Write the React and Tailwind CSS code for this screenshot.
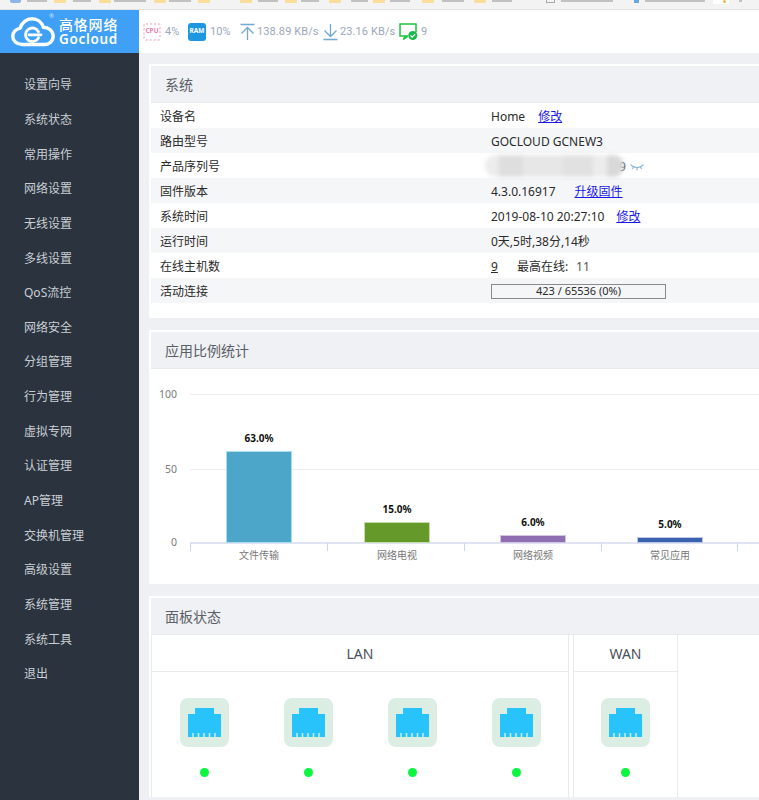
const font = "[font-family:'Noto_Sans','Noto_Sans_CJK_SC',sans-serif]";

const menu = ['设置向导', '系统状态', '常用操作', '网络设置', '无线设置', '多线设置', 'QoS流控', '网络安全', '分组管理', '行为管理', '虚拟专网', '认证管理', 'AP管理', '交换机管理', '高级设置', '系统管理', '系统工具', '退出'];

const bars = [
  { label: '文件传输', value: '63.0%', x: 226, y: 451, color: '#4ba6c9', edge: '#a9dcec' },
  { label: '网络电视', value: '15.0%', x: 364, y: 522, color: '#659a2a', edge: '#c4dca8' },
  { label: '网络视频', value: '6.0%', x: 500, y: 535, color: '#8f6fb1', edge: '#d3c5e2' },
  { label: '常见应用', value: '5.0%', x: 637, y: 537, color: '#3a62ae', edge: '#b9c8e6' },
];

function Folder({ className }) {
  return <div className={`h-[3px] w-3 shrink-0 rounded-b-[1px] bg-[#f9dd98] ${className}`} />;
}

function Smudge({ className }) {
  return <div className={`h-[2px] shrink-0 bg-[#c2c2c2] blur-[0.5px] ${className}`} />;
}

function BookmarkBar() {
  return (
    <div className="flex h-[10px] items-start overflow-hidden border-b border-[#e2e2e2] bg-[#f3f3f3]">
      <div className="ml-[10px] h-[3px] w-[11px] shrink-0 rounded-b-[2px] bg-[#8db4ec]" />
      <Smudge className="ml-[6px] w-5" />
      <Folder className="ml-[7px]" />
      <Smudge className="ml-[7px] w-[18px]" />
      <Folder className="ml-2" />
      <Smudge className="ml-[3px] w-8" />
      <Folder className="ml-2" />
      <Smudge className="ml-[3px] w-[22px]" />
      <Folder className="ml-[7px]" />
      <Folder className="ml-[30px]" />
      <Smudge className="ml-[6px] w-5" />
      <Folder className="ml-[7px]" />
      <Smudge className="ml-1 w-[18px]" />
      <Folder className="ml-[10px]" />
      <Smudge className="ml-[10px] w-[17px]" />
      <Folder className="ml-[5px]" />
      <Smudge className="ml-[5px] w-5" />
      <Folder className="ml-3" />
      <Smudge className="ml-2 w-[22px]" />
      <Folder className="ml-[10px]" />
      <Smudge className="ml-[6px] w-5" />
      <div className="ml-[34px] h-[3px] w-[9px] shrink-0 border-x border-b border-[#aaaaaa]" />
      <Smudge className="ml-[6px] w-[52px]" />
      <div className="ml-[21px] h-[3px] w-[5px] shrink-0 bg-[#6aa5e0]" />
      <Smudge className="ml-[6px] w-[60px]" />
      <div className="ml-2 h-[4px] w-[16px] shrink-0 bg-white" />
      <div className="-ml-[6px] h-[3px] w-[3px] shrink-0 rounded-full bg-[#f5b548]" />
      <Smudge className="ml-[13px] w-[3px]" />
      <Smudge className="ml-6 w-8" />
    </div>
  );
}

function Logo() {
  return (
    <div className="flex h-[43px] w-[139px] shrink-0 items-center bg-[#40a0f5] pl-[11px] text-white">
      <svg width="44" height="30" viewBox="0 0 44 30" fill="none" className="shrink-0">
        <path d="M11 27.500C5.500 27.500 1.800 23.800 1.800 19.400c0-4.300 3.200-7.600 7.300-8C10.600 5.300 15.800 1.800 21 1.800c5.300 0 9.800 3.400 11.300 8.400 5.300 0 9.900 3.800 9.900 8.900 0 4.900-4 8.400-9 8.400Z" stroke="white" strokeWidth="3.400" strokeLinejoin="round" />
        <path d="M27.500 14.800a6.800 6.800 0 1 0 0 6" stroke="white" strokeWidth="2.800" strokeLinecap="round" />
        <path d="M18 17.800h12" stroke="white" strokeWidth="2.800" strokeLinecap="round" />
      </svg>
      <div className="relative ml-[4px] flex flex-col">
        <span className="text-[14px] leading-[15px] font-medium tracking-[0.8px] whitespace-nowrap">高恪网络</span>
        <span className="text-[13.500px] leading-[14px] font-semibold tracking-[0.7px]">Gocloud</span>
        <span className="absolute -top-[5px] -left-[10px] text-[6px] leading-[8px] text-[#cfe6fb]">®</span>
      </div>
    </div>
  );
}

function Stat({ children, icon, className = '' }) {
  return (
    <div className={`flex items-center ${className}`}>
      {icon}
      <span className="font-['Roboto'] text-[11px] leading-4 tracking-[0.1px] whitespace-nowrap text-[#9ba8b8]">{children}</span>
    </div>
  );
}

function TopBar() {
  return (
    <div className="flex h-[43px] flex-1 items-center bg-white pl-[4px]">
      <Stat
        className="w-[45px]"
        icon={
          <div className="mr-[4px] flex h-[18px] w-[18px] items-center justify-center rounded-[3px] border-2 border-dotted border-[#f9c9de]">
            <span className="text-[6.500px] leading-none font-bold text-[#ec7fb0]">CPU</span>
          </div>
        }
      >
        4%
      </Stat>
      <Stat
        className="w-[51px]"
        icon={
          <div className="mr-[4px] flex h-[18px] w-[18px] items-center justify-center rounded-[3px] border border-dotted border-[#1e96e0] bg-[#1e96e0]">
            <span className="text-[6.500px] leading-none font-bold text-white">RAM</span>
          </div>
        }
      >
        10%
      </Stat>
      <Stat
        className="w-[83px]"
        icon={
          <svg width="17" height="18" viewBox="0 0 17 18" fill="none" stroke="#73a8d0" strokeWidth="1.300" className="mr-[1px]">
            <path d="M1.500 1.500h14M8.500 17V5M2.500 10.500l6-6 6 6" />
          </svg>
        }
      >
        138.89 KB/s
      </Stat>
      <Stat
        className="w-[77px]"
        icon={
          <svg width="17" height="18" viewBox="0 0 17 18" fill="none" stroke="#73a8d0" strokeWidth="1.300" className="mr-[1px]">
            <path d="M1.500 16.500h14M8.500 1v12M2.500 7.500l6 6 6-6" />
          </svg>
        }
      >
        23.16 KB/s
      </Stat>
      <Stat
        icon={
          <svg width="19" height="18" viewBox="0 0 19 18" fill="none" className="mr-[3px]">
            <path d="M9 13H1V1h16v8M6 13l-1.500 3.500L9 13" stroke="#19c33c" strokeWidth="1.500" />
            <circle cx="13.800" cy="12.500" r="4.500" fill="#19b84a" />
            <path d="M11.500 12.500l1.700 1.700 3-3" stroke="white" strokeWidth="1.200" />
          </svg>
        }
      >
        9
      </Stat>
    </div>
  );
}

function Sidebar() {
  return (
    <div className="w-[139px] shrink-0 bg-[#2a333e] pt-[15px]">
      {menu.map((item) => (
        <div key={item} className="flex h-[34.650px] items-center pl-6 text-[12px] text-[#c9ced4]">{item}</div>
      ))}
    </div>
  );
}

function PanelHeader({ title }) {
  return (
    <div className="flex h-[37px] items-center border-b border-[#e8eaf0] bg-[#eff1f5] pl-[14px] text-[14px] text-[#5c5f66]">{title}</div>
  );
}

function Row({ label, shaded, children }) {
  return (
    <div className={`flex h-[25px] items-center pl-[9px] pt-[2px] text-[12px] text-[#2b2b2b] ${shaded ? 'bg-[#f5f6f8]' : 'bg-white'}`}>
      <div className="w-[331px] shrink-0">{label}</div>
      <div className="flex items-center whitespace-nowrap">{children}</div>
    </div>
  );
}

function EditLink({ children, className = '' }) {
  return <a href="#" className={`text-[#1a1ae6] underline ${className}`}>{children}</a>;
}

function SystemPanel() {
  return (
    <div className="bg-white pt-[2px] pb-[15px] pl-[2px]">
      <PanelHeader title="系统" />
      <Row label="设备名">Home<EditLink className="ml-[13px]">修改</EditLink></Row>
      <Row label="路由型号" shaded>GOCLOUD GCNEW3</Row>
      <Row label="产品序列号">
        <div className="relative h-[23px] w-[129px]">
          <span className="absolute top-[3px] left-[128px]">9</span>
          <div className="absolute top-0 -left-[6px] flex h-[22px] w-[139px] overflow-hidden rounded-full bg-[#ececec] blur-[2px]">
            <div className="ml-[14px] w-[24px] bg-[#dedede]" />
            <div className="w-[40px] bg-[#e7e7e7]" />
            <div className="w-[30px] bg-[#e1e1e1]" />
            <div className="ml-[14px] w-[17px] bg-[#d9d9d9]" />
          </div>
        </div>
        <svg width="14" height="8" viewBox="0 0 14 8" fill="none" stroke="#7fb3da" strokeWidth="1.100" className="ml-[10px]">
          <path d="M0.500 1.500C4 5.500 10 5.500 13.500 1.500M3.500 4L2.500 6M7 5V7.500M10.500 4L11.500 6" />
        </svg>
      </Row>
      <Row label="固件版本" shaded>4.3.0.16917<EditLink className="ml-[19px]">升级固件</EditLink></Row>
      <Row label="系统时间">2019-08-10 20:27:10<EditLink className="ml-[12px]">修改</EditLink></Row>
      <Row label="运行时间" shaded>0天,5时,38分,14秒</Row>
      <Row label="在线主机数">
        <span className="underline">9</span>
        <span className="ml-[19px]">最高在线:</span>
        <span className="ml-[8px] text-[#555555]">11</span>
      </Row>
      <Row label="活动连接" shaded>
        <div className="flex h-[15px] w-[175px] items-center justify-center border border-[#8a8a8a] bg-[#f5f6f8] text-[11px]">423 / 65536 (0%)</div>
      </Row>
    </div>
  );
}

function AppChart() {
  return (
    <div className="overflow-hidden bg-white pt-[2px] pl-[2px]">
      <PanelHeader title="应用比例统计" />
      {/* viewBox starts where the panel header ends, so coords below read as page coords */}
      <svg width="608" height="215" viewBox="151 369 608 215" className="block">
        <g stroke="#e8ebf2">
          <line x1="190" y1="394.500" x2="760" y2="394.500" />
          <line x1="190" y1="469.500" x2="760" y2="469.500" />
        </g>
        <line x1="190" y1="543" x2="760" y2="543" stroke="#dfe3f3" strokeWidth="2" />
        {[190.500, 327.500, 464.500, 601.500, 737.500].map((x) => (
          <line key={x} x1={x} y1="543" x2={x} y2="551" stroke="#ccd6eb" />
        ))}
        <g fill="#7a7a7a" fontSize="10.500" textAnchor="end" fontFamily="'Noto Sans', sans-serif">
          <text x="177" y="398">100</text>
          <text x="177" y="473">50</text>
          <text x="177" y="546">0</text>
        </g>
        {bars.map((b) => (
          <g key={b.label}>
            <rect x={b.x + 0.5} y={b.y + 0.5} width="65" height={542 - b.y} fill={b.color} stroke={b.edge} />
            <text x={b.x + 33} y={b.y - 9} fontSize="10" fontWeight="700" textAnchor="middle" fill="#111111" fontFamily="'Noto Sans', sans-serif">{b.value}</text>
            <text x={b.x + 33} y="559" fontSize="10" textAnchor="middle" fill="#777777" fontFamily="'Noto Sans CJK SC', sans-serif">{b.label}</text>
          </g>
        ))}
      </svg>
    </div>
  );
}

function Port() {
  return (
    <div className="flex flex-col items-center pt-[26px]">
      <div className="flex h-[49px] w-[49px] items-center justify-center rounded-[8px] bg-[#dceee4]">
        <svg width="33" height="29" viewBox="0 0 33 29">
          <path d="M0 29V6h7V0h19v6h7v23Z" fill="#29c3fb" />
          <g fill="#dceee4">
            <rect x="4.300" y="25" width="1.400" height="4" />
            <rect x="9.800" y="25" width="1.400" height="4" />
            <rect x="15.300" y="25" width="1.400" height="4" />
            <rect x="20.800" y="25" width="1.400" height="4" />
            <rect x="26.300" y="25" width="1.400" height="4" />
          </g>
        </svg>
      </div>
      <div className="mt-[21px] h-[9px] w-[9px] rounded-full bg-[#0cf53f]" />
    </div>
  );
}

function PortPanel() {
  return (
    <div className="bg-white pt-[2px] pl-[2px]">
      <PanelHeader title="面板状态" />
      <div className="flex">
        <div className="w-[418px] border-x border-[#e8eaf0]">
          <div className="flex h-[37px] items-center justify-center border-b border-[#e8eaf0] text-[14px] text-[#4a4f5a]">LAN</div>
          <div className="grid h-[125px] grid-cols-4">
            <Port />
            <Port />
            <Port />
            <Port />
          </div>
        </div>
        <div className="ml-[4px] w-[105px] border-x border-[#e8eaf0]">
          <div className="flex h-[37px] items-center justify-center border-b border-[#e8eaf0] text-[14px] text-[#4a4f5a]">WAN</div>
          <div className="h-[125px]">
            <Port />
          </div>
        </div>
      </div>
    </div>
  );
}

export default function App() {
  return (
    <div className={`flex h-[800px] w-[759px] flex-col overflow-hidden bg-[#eef0f4] ${font}`}>
      <BookmarkBar />
      <div className="flex shrink-0">
        <Logo />
        <TopBar />
      </div>
      <div className="flex flex-1 overflow-hidden">
        <Sidebar />
        <div className="flex flex-1 flex-col gap-3 pt-[11px] pl-[10px]">
          <SystemPanel />
          <AppChart />
          <PortPanel />
        </div>
      </div>
    </div>
  );
}
